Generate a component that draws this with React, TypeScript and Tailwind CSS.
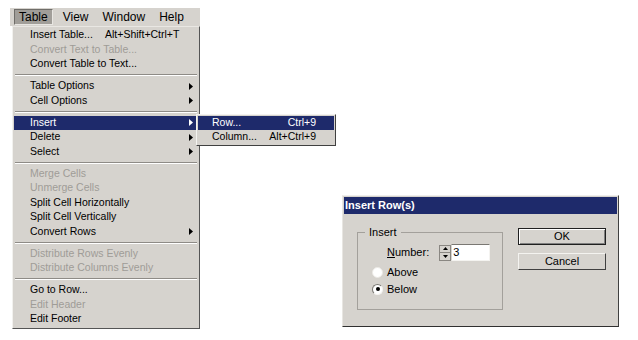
import React from "react";

const font = { fontFamily: '"Liberation Sans", Arial, sans-serif' };

type Item =
  | { sep: true }
  | { label: string; shortcut?: string; disabled?: boolean; arrow?: boolean; active?: boolean; sep?: false };

const items: Item[] = [
  { label: "Insert Table...", shortcut: "Alt+Shift+Ctrl+T" },
  { label: "Convert Text to Table...", disabled: true },
  { label: "Convert Table to Text..." },
  { sep: true },
  { label: "Table Options", arrow: true },
  { label: "Cell Options", arrow: true },
  { sep: true },
  { label: "Insert", arrow: true, active: true },
  { label: "Delete", arrow: true },
  { label: "Select", arrow: true },
  { sep: true },
  { label: "Merge Cells", disabled: true },
  { label: "Unmerge Cells", disabled: true },
  { label: "Split Cell Horizontally" },
  { label: "Split Cell Vertically" },
  { label: "Convert Rows", arrow: true },
  { sep: true },
  { label: "Distribute Rows Evenly", disabled: true },
  { label: "Distribute Columns Evenly", disabled: true },
  { sep: true },
  { label: "Go to Row..." },
  { label: "Edit Header", disabled: true },
  { label: "Edit Footer" },
];

function Arrow({ white }: { white?: boolean }) {
  return (
    <svg width="4" height="7" viewBox="0 0 4 7" className="shrink-0">
      <path d="M0 0 L4 3.5 L0 7 Z" fill={white ? "#ffffff" : "#000000"} />
    </svg>
  );
}

function SubMenu() {
  return (
    <div className="absolute left-[182px] top-[-2px] w-[140px] bg-[#d6d3ce] border border-t-[#f4f3f0] border-l-[#f4f3f0] border-r-[#404040] border-b-[#404040] py-[1px] px-[1px] z-10">
      <div className="flex items-center h-[14px] bg-[#1e2a6b] text-white pl-[14px] pr-[18px]">
        <span className="flex-1">Row...</span>
        <span>Ctrl+9</span>
      </div>
      <div className="flex items-center h-[14px] text-black pl-[14px] pr-[18px]">
        <span className="flex-1">Column...</span>
        <span>Alt+Ctrl+9</span>
      </div>
    </div>
  );
}

function Menu() {
  return (
    <div className="flex flex-col w-[190px] ml-[10px] mt-[8px]" style={font}>
      <div className="flex items-center h-[18px] bg-[#d6d3ce] text-[12px] text-black">
        <div className="h-[16px] ml-[4px] px-[4px] flex items-center bg-[#a19e99] border border-t-[#6f6d69] border-l-[#6f6d69] border-r-[#e8e6e2] border-b-[#e8e6e2]">
          Table
        </div>
        <span className="ml-[6px] px-[4px]">View</span>
        <span className="ml-[6px] px-[4px]">Window</span>
        <span className="ml-[6px] px-[4px]">Help</span>
      </div>
      <div className="ml-[2px] w-[188px] bg-[#d6d3ce] text-[10.5px] border border-t-[#e9e7e3] border-l-[#f2f1ee] border-r-[#555555] border-b-[#555555] pt-[1px] pb-[1px] px-[1px]">
        {items.map((it, i) =>
          it.sep ? (
            <div key={i} className="h-[7.5px] flex flex-col justify-center px-[1px]">
              <div className="h-[1px] bg-[#8e8b86]" />
              <div className="h-[1px] bg-[#ffffff]" />
            </div>
          ) : (
            <div
              key={i}
              className={`relative flex items-center h-[14.5px] pl-[16px] pr-[5px] ${
                it.active ? "bg-[#1e2a6b] text-white" : it.disabled ? "text-[#9f9c97]" : "text-black"
              }`}
            >
              <span className={it.shortcut ? "w-[75px]" : "flex-1"}>{it.label}</span>
              {it.shortcut && <span className="flex-1">{it.shortcut}</span>}
              {it.arrow && <Arrow white={it.active} />}
              {it.active && <SubMenu />}
            </div>
          )
        )}
      </div>
    </div>
  );
}

function Radio({ checked, label }: { checked?: boolean; label: string }) {
  return (
    <div className="flex items-center h-[17px]">
      <div
        className={`w-[11px] h-[11px] rounded-full flex items-center justify-center border ${
          checked ? "border-t-[#7a7873] border-l-[#7a7873] border-r-[#f4f3f0] border-b-[#f4f3f0] bg-white" : "border-[#eceae6] bg-white"
        }`}
      >
        {checked && <div className="w-[4px] h-[4px] rounded-full bg-black" />}
      </div>
      <span className="ml-[4px]">{label}</span>
    </div>
  );
}

function Dialog() {
  return (
    <div
      className="ml-[142px] mt-[195px] w-[277px] h-[132px] flex flex-col bg-[#d6d3ce] border border-t-[#f0efec] border-l-[#e8e6e2] border-r-[#404040] border-b-[#303030] text-[11px] text-black"
      style={font}
    >
      <div className="h-[17px] mx-[1px] mt-[1px] bg-[#1e2a6b] text-white font-bold text-[11px] flex items-center pl-[1px]">
        Insert Row(s)
      </div>
      <div className="flex flex-1">
        <fieldset className="ml-[14px] mt-[10px] mb-[16px] w-[146px] border border-[#a3a09b] pl-[14px] pr-0 pt-[3px] pb-0 min-w-0">
          <legend className="ml-[-7px] px-[4px] text-[11px]">Insert</legend>
          <div className="flex items-center ml-[15px] h-[18px]">
            <span>
              <span className="underline">N</span>umber:
            </span>
            <div className="ml-[10px] w-[12px] h-[16px] flex flex-col bg-[#d6d3ce] border border-[#8a8782]">
              <div className="flex-1 flex items-center justify-center border-b border-[#8a8782]">
                <svg width="5" height="3" viewBox="0 0 5 3"><path d="M0 3 L2.5 0 L5 3 Z" fill="#000" /></svg>
              </div>
              <div className="flex-1 flex items-center justify-center">
                <svg width="5" height="3" viewBox="0 0 5 3"><path d="M0 0 L2.5 3 L5 0 Z" fill="#000" /></svg>
              </div>
            </div>
            <div className="w-[39px] h-[17px] bg-white border border-t-[#7a7873] border-l-[#d6d3ce] border-r-[#f4f3f0] border-b-[#f4f3f0] flex items-center pl-[1px]">
              3
            </div>
          </div>
          <div className="mt-[2px]">
            <Radio label="Above" />
            <Radio checked label="Below" />
          </div>
        </fieldset>
        <div className="ml-[15px] mt-[14px] flex flex-col gap-[8px]">
          <div className="w-[88px] h-[17px] flex items-center justify-center bg-[#d6d3ce] border border-[#202020] shadow-[inset_1px_1px_0_#ffffff,inset_-1px_-1px_0_#808080]">
            OK
          </div>
          <div className="w-[88px] h-[17px] flex items-center justify-center bg-[#d6d3ce] border border-t-[#f4f3f0] border-l-[#f4f3f0] border-r-[#404040] border-b-[#404040]">
            Cancel
          </div>
        </div>
      </div>
    </div>
  );
}

export default function App() {
  return (
    <div className="w-[638px] h-[340px] bg-white flex items-start overflow-hidden">
      <Menu />
      <Dialog />
    </div>
  );
}
